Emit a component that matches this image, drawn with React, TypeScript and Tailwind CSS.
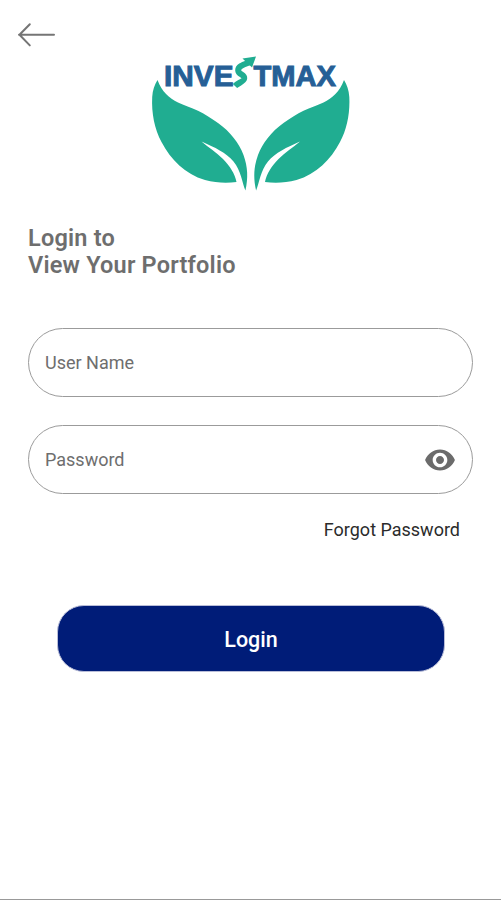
import { useState } from "react"

const leafPath =
  "M157.5 80C154.500 85 152.700 90 152.200 97C151.400 113 154.500 129 161.500 142C171 160 185 174 205 180C216 183 227 183.300 236.500 182C235 174 230 166 223 159C216 152 209 148 201.500 141.500C215 147.500 226 152.500 233.500 161.500C241 170.500 242 182 245.400 190.500C248.300 178 247.800 167 243.500 155C239 143 230.500 132 218 123C211 118 204.500 113.800 198 110.700C191 107.400 184 105.500 178 102.500C169 98 162 92 157.500 80Z"

function BackArrow() {
  return (
    <svg width="40" height="26" viewBox="0 0 40 26" fill="none" stroke="#757575" strokeWidth="2" strokeLinecap="round" strokeLinejoin="round">
      <path d="M37 12.8H2M12.8 2.200L2.500 12.800L12.800 23.400" />
    </svg>
  )
}

function EyeIcon() {
  return (
    <svg width="32" height="32" viewBox="0 0 24 24" fill="#6b6b6b">
      <path d="M12 4.2C7 4.2 2.73 7.4 .8 12c1.93 4.6 6.200 7.800 11.200 7.800s9.270-3.200 11.200-7.800c-1.930-4.600-6.200-7.800-11.200-7.800zM12 17.500c-3.040 0-5.500-2.460-5.500-5.500s2.460-5.500 5.500-5.500 5.500 2.460 5.500 5.500-2.460 5.500-5.500 5.500zm0-8.500c-1.660 0-3 1.340-3 3s1.340 3 3 3 3-1.340 3-3-1.340-3-3-3z" />
    </svg>
  )
}

function Logo() {
  return (
    <svg width="210" height="145" viewBox="145 50 210 145" role="img" aria-label="Investmax">
      <g fill="#265f96" stroke="#265f96" strokeWidth="1" fontFamily="'Liberation Sans', Arial, sans-serif" fontWeight="700" fontSize="29">
        <text x="164" y="86" textLength="69.500" lengthAdjust="spacingAndGlyphs">INVE</text>
        <text x="253.500" y="86" textLength="82.500" lengthAdjust="spacingAndGlyphs">TMAX</text>
      </g>
      <path fill="none" stroke="#20ad91" strokeWidth="6" d="M250.5 62C244 64.500 237.800 66 238.200 70.500C238.500 75 244.800 74 244.200 78.500C243.500 82 238.500 82.500 235 86" />
      <path fill="#20ad91" d="M242.500 58.500L256 56.500L252 67.500Z" />
      <g fill="#20ad91">
        <path d={leafPath} />
        <path transform="translate(501.500 0) scale(-1 1)" d={leafPath} />
      </g>
    </svg>
  )
}

const fieldClass =
  "block h-[69px] w-full rounded-[35px] border border-[#9b9b9b] bg-white pl-4 pr-16 text-[18px] text-[#6e6e6e] outline-none placeholder:text-[#6e6e6e] placeholder:opacity-100"

export default function App() {
  const [userName, setUserName] = useState("")
  const [password, setPassword] = useState("")
  const [showPassword, setShowPassword] = useState(false)

  return (
    <div className="flex h-screen flex-col border-b border-[#999999] bg-white font-['Roboto',sans-serif]">
      <header className="flex h-[50px] shrink-0 items-start pl-[17px] pt-[22px]">
        <button type="button" aria-label="Back" className="cursor-pointer">
          <BackArrow />
        </button>
      </header>

      <div className="flex shrink-0 justify-center pr-px">
        <Logo />
      </div>

      <form className="flex flex-col px-7 pt-[30px]" onSubmit={(e) => e.preventDefault()}>
        <h1 className="text-[23.5px] font-semibold leading-[27px] tracking-[0.2px] text-[#6e6e6e]">
          Login to
          <br />
          View Your Portfolio
        </h1>

        <input
          type="text"
          placeholder="User Name"
          value={userName}
          onChange={(e) => setUserName(e.target.value)}
          className={`mt-[49px] ${fieldClass}`}
        />

        <div className="relative mt-7">
          <input
            type={showPassword ? "text" : "password"}
            placeholder="Password"
            value={password}
            onChange={(e) => setPassword(e.target.value)}
            className={fieldClass}
          />
          <button
            type="button"
            aria-label="Show password"
            onClick={() => setShowPassword(!showPassword)}
            className="absolute right-[17px] top-[19px] cursor-pointer"
          >
            <EyeIcon />
          </button>
        </div>

        <button type="button" className="mr-[13px] mt-[23px] cursor-pointer self-end text-[18px] leading-[26px] text-[#2b2b2b]">
          Forgot Password
        </button>

        <button type="submit" className="ml-[29px] mr-[28px] mt-[62px] h-[67px] cursor-pointer rounded-[27px] border border-[#b9bdd8] bg-[#001c78] pt-[3px] text-[21.5px] font-medium text-white">
          Login
        </button>
      </form>
    </div>
  )
}
